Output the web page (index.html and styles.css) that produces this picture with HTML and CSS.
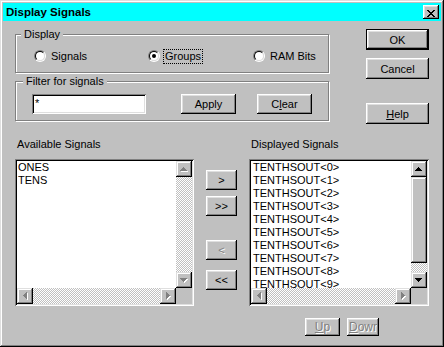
FILE: index.html
```html
<!DOCTYPE html>
<html lang="en">
<head>
    <meta charset="UTF-8">
    <title>Display Signals</title>
    <link rel="stylesheet" href="styles.css">
</head>
<body>
    <div class="window">
        <div class="titlebar">
            <span class="title">Display Signals</span>
            <button class="close-btn">
                <svg class="glyph" width="8" height="8"><path d="M0 0h2v1H0zM6 0h2v1H6zM1 1h2v1H1zM5 1h2v1H5zM2 2h4v1H2zM3 3h2v1H3zM2 4h4v1H2zM1 5h2v1H1zM5 5h2v1H5zM0 6h2v1H0zM6 6h2v1H6z"/></svg>
            </button>
        </div>

        <div class="client">
            <div class="top-row">
                <div class="groups">
                    <div class="group group-display">
                        <span class="group-label label-display">Display</span>
                        <div class="radio-row">
                            <div class="radio-item item-signals">
                                <span class="radio"><span class="radio-inner"></span></span>
                                <span class="radio-text">Signals</span>
                            </div>
                            <div class="radio-item item-groups">
                                <span class="radio"><span class="radio-inner"><span class="radio-dot"></span></span></span>
                                <span class="radio-text focus">Groups</span>
                            </div>
                            <div class="radio-item">
                                <span class="radio"><span class="radio-inner"></span></span>
                                <span class="radio-text">RAM Bits</span>
                            </div>
                        </div>
                    </div>

                    <div class="group group-filter">
                        <span class="group-label label-filter">Filter for signals</span>
                        <div class="filter-row">
                            <div class="textbox">*</div>
                            <button class="btn btn-apply">Apply</button>
                            <button class="btn btn-clear">C<u>l</u>ear</button>
                        </div>
                    </div>
                </div>

                <div class="side-buttons">
                    <button class="btn btn-side btn-default">OK</button>
                    <button class="btn btn-side btn-cancel">Cancel</button>
                    <button class="btn btn-side btn-help"><u>H</u>elp</button>
                </div>
            </div>

            <div class="lists-row">
                <div class="list-col list-available">
                    <div class="list-label">Available Signals</div>
                    <div class="listbox">
                        <div class="list-items">
                            <div class="list-item">ONES</div>
                            <div class="list-item">TENS</div>
                        </div>
                        <div class="vscroll">
                            <div class="sb-btn"><svg class="glyph off" width="8" height="4"><path class="shade" transform="translate(1 1)" d="M3 0h1v1h1v1h1v1h1v1H0V3h1V2h1V1h1z"/><path d="M3 0h1v1h1v1h1v1h1v1H0V3h1V2h1V1h1z"/></svg></div>
                            <div class="sb-track"></div>
                            <div class="sb-btn"><svg class="glyph off" width="8" height="4"><path class="shade" transform="translate(1 1)" d="M0 0h7v1H6v1H5v1H4v1H3V3H2V2H1V1H0z"/><path d="M0 0h7v1H6v1H5v1H4v1H3V3H2V2H1V1H0z"/></svg></div>
                        </div>
                        <div class="hscroll">
                            <div class="sb-btn"><svg class="glyph off" width="4" height="8"><path class="shade" transform="translate(1 1)" d="M3 0h1v7H3V6H2V5H1V4H0V3h1V2h1V1h1z"/><path d="M3 0h1v7H3V6H2V5H1V4H0V3h1V2h1V1h1z"/></svg></div>
                            <div class="sb-track"></div>
                            <div class="sb-btn"><svg class="glyph off" width="4" height="8"><path class="shade" transform="translate(1 1)" d="M0 0h1v1h1v1h1v1h1v1H3v1H2v1H1v1H0z"/><path d="M0 0h1v1h1v1h1v1h1v1H3v1H2v1H1v1H0z"/></svg></div>
                        </div>
                        <div class="sb-corner"></div>
                    </div>
                </div>

                <div class="move-buttons">
                    <button class="btn btn-move">&gt;</button>
                    <button class="btn btn-move btn-add-all">&gt;&gt;</button>
                    <button class="btn btn-move btn-remove disabled">&lt;</button>
                    <button class="btn btn-move btn-remove-all">&lt;&lt;</button>
                </div>

                <div class="list-col list-displayed">
                    <div class="list-label">Displayed Signals</div>
                    <div class="listbox">
                        <div class="list-items list-shifted">
                            <div class="list-item">TENTHSOUT&lt;0&gt;</div>
                            <div class="list-item">TENTHSOUT&lt;1&gt;</div>
                            <div class="list-item">TENTHSOUT&lt;2&gt;</div>
                            <div class="list-item">TENTHSOUT&lt;3&gt;</div>
                            <div class="list-item">TENTHSOUT&lt;4&gt;</div>
                            <div class="list-item">TENTHSOUT&lt;5&gt;</div>
                            <div class="list-item">TENTHSOUT&lt;6&gt;</div>
                            <div class="list-item">TENTHSOUT&lt;7&gt;</div>
                            <div class="list-item">TENTHSOUT&lt;8&gt;</div>
                            <div class="list-item">TENTHSOUT&lt;9&gt;</div>
                        </div>
                        <div class="vscroll">
                            <div class="sb-btn"><svg class="glyph" width="8" height="4"><path d="M3 0h1v1h1v1h1v1h1v1H0V3h1V2h1V1h1z"/></svg></div>
                            <div class="sb-thumb"></div>
                            <div class="sb-track"></div>
                            <div class="sb-btn"><svg class="glyph" width="8" height="4"><path d="M0 0h7v1H6v1H5v1H4v1H3V3H2V2H1V1H0z"/></svg></div>
                        </div>
                        <div class="hscroll">
                            <div class="sb-btn"><svg class="glyph off" width="4" height="8"><path class="shade" transform="translate(1 1)" d="M3 0h1v7H3V6H2V5H1V4H0V3h1V2h1V1h1z"/><path d="M3 0h1v7H3V6H2V5H1V4H0V3h1V2h1V1h1z"/></svg></div>
                            <div class="sb-track"></div>
                            <div class="sb-btn"><svg class="glyph off" width="4" height="8"><path class="shade" transform="translate(1 1)" d="M0 0h1v1h1v1h1v1h1v1H3v1H2v1H1v1H0z"/><path d="M0 0h1v1h1v1h1v1h1v1H3v1H2v1H1v1H0z"/></svg></div>
                        </div>
                        <div class="sb-corner"></div>
                    </div>
                </div>
            </div>

            <div class="bottom-row">
                <button class="btn btn-small btn-up disabled"><span><u>U</u>p</span></button>
                <button class="btn btn-small btn-down disabled"><span><u>D</u>own</span></button>
            </div>
        </div>
    </div>
</body>
</html>
```

FILE: styles.css
```css
* {
    box-sizing: border-box;
}

body {
    margin: 0;
    background: #c0c0c0;
    font-family: 'Liberation Sans', Arial, sans-serif;
    font-size: 11px;
    color: #000;
}

/* Window frame */
.window {
    width: 444px;
    height: 347px;
    padding: 3px;
    background: #c0c0c0;
    box-shadow: inset -1px -1px #000, inset 1px 1px #dfdfdf, inset -2px -2px #808080, inset 2px 2px #fff;
}

.titlebar {
    height: 18px;
    display: flex;
    align-items: center;
    justify-content: space-between;
    padding: 0 2px 0 3px;
    background: #00ffff;
}

.title {
    font-weight: bold;
    font-size: 11.5px;
    line-height: 18px;
}

button {
    margin: 0;
    padding: 0;
    border: 0;
    font: inherit;
    color: #000;
    background: #c0c0c0;
    display: flex;
    align-items: center;
    justify-content: center;
}

.btn,
.close-btn,
.sb-btn,
.sb-thumb {
    background: #c0c0c0;
    box-shadow: inset -1px -1px #000, inset 1px 1px #fff, inset -2px -2px #808080, inset 2px 2px #dfdfdf;
}

.sb-btn,
.sb-thumb {
    box-shadow: inset -1px -1px #000, inset 1px 1px #dfdfdf, inset -2px -2px #808080, inset 2px 2px #fff;
}

.close-btn {
    width: 16px;
    height: 14px;
    display: block;
    padding: 3px 0 0 4px;
}

.glyph {
    display: block;
    overflow: visible;
    shape-rendering: crispEdges;
    fill: #000;
}

.glyph.off path {
    fill: #808080;
}

.glyph.off .shade {
    fill: #fff;
}

.btn-default {
    border: 1px solid #000;
}

.disabled {
    color: #808080;
    text-shadow: 1px 1px 0 #fff;
}

/* Client area */
.client {
    padding: 8px 0 0 12px;
}

.top-row {
    display: flex;
    align-items: flex-start;
}

.groups {
    width: 314px;
    margin: 5px 37px 0 0;
}

.group {
    border: 1px solid #808080;
    box-shadow: inset 1px 1px #fff, 1px 1px #fff;
}

.group-display {
    height: 39px;
}

.group-filter {
    height: 40px;
    margin-top: 8px;
}

.group-label {
    display: block;
    width: fit-content;
    margin-top: -7px;
    padding: 0 3px;
    line-height: 13px;
    background: #c0c0c0;
}

.label-display {
    margin-left: 5px;
}

.label-filter {
    margin-left: 7px;
}

/* Radio buttons */
.radio-row {
    display: flex;
    align-items: center;
    height: 12px;
    margin-top: 9px;
    padding-left: 18px;
}

.radio-item {
    display: flex;
    align-items: center;
}

.item-signals {
    width: 114px;
}

.item-groups {
    width: 105px;
}

.radio {
    width: 12px;
    height: 12px;
    margin-right: 3px;
    border: 1px solid;
    border-color: #808080 #fff #fff #808080;
    border-radius: 50%;
    display: flex;
}

.radio-inner {
    width: 10px;
    height: 10px;
    border: 1px solid;
    border-color: #000 #dfdfdf #dfdfdf #000;
    border-radius: 50%;
    background: #fff;
    display: flex;
    align-items: center;
    justify-content: center;
}

.radio-dot {
    width: 4px;
    height: 4px;
    border-radius: 50%;
    background: #000;
}

.radio-text {
    padding: 0 1px;
    border: 1px solid transparent;
    line-height: 13px;
}

.radio-text.focus {
    border: 1px dotted #000;
}

/* Filter */
.filter-row {
    display: flex;
    margin-top: 6px;
    padding-left: 16px;
}

.textbox {
    width: 114px;
    height: 20px;
    padding: 3px 3px 0;
    line-height: 13px;
    background: #fff;
    box-shadow: inset 1px 1px #808080, inset -1px -1px #fff, inset 2px 2px #000, inset -2px -2px #dfdfdf;
}

.btn-apply,
.btn-clear {
    width: 55px;
    height: 20px;
}

.btn-apply {
    margin-left: 35px;
}

.btn-clear {
    margin-left: 21px;
}

/* OK / Cancel / Help */
.side-buttons {
    width: 63px;
    display: flex;
    flex-direction: column;
}

.btn-side {
    width: 63px;
    height: 21px;
}

.btn-cancel {
    margin-top: 8px;
}

.btn-help {
    margin-top: 24px;
}

/* Lists */
.lists-row {
    display: flex;
    margin-top: 14px;
}

.list-available {
    width: 179px;
}

.list-displayed {
    width: 180px;
}

.list-label {
    height: 13px;
    line-height: 13px;
    padding-left: 2px;
    margin-bottom: 8px;
}

.listbox {
    height: 147px;
    padding: 2px;
    display: grid;
    grid-template-columns: 1fr 16px;
    grid-template-rows: 1fr 16px;
    box-shadow: inset 1px 1px #808080, inset -1px -1px #fff, inset 2px 2px #000, inset -2px -2px #dfdfdf;
}

.list-items {
    padding-left: 1px;
    background: #fff;
    overflow: hidden;
}

.list-shifted {
    padding-left: 2px;
}

.list-item {
    line-height: 13px;
    white-space: nowrap;
}

.vscroll {
    display: flex;
    flex-direction: column;
}

.hscroll {
    display: flex;
}

.sb-btn {
    width: 16px;
    height: 16px;
    flex: none;
    display: flex;
    align-items: center;
    justify-content: center;
}

.sb-thumb {
    height: 86px;
    flex: none;
}

.sb-track {
    flex: 1;
    background-image: conic-gradient(#fff 25%, #c0c0c0 0 50%, #fff 0 75%, #c0c0c0 0);
    background-size: 2px 2px;
}

.sb-corner {
    background: #c0c0c0;
}

/* Move buttons */
.move-buttons {
    width: 31px;
    margin: 0 12px;
    padding-top: 32px;
    display: flex;
    flex-direction: column;
}

.btn-move {
    height: 20px;
}

.btn-add-all {
    margin-top: 6px;
}

.btn-remove {
    margin-top: 24px;
}

.btn-remove-all {
    margin-top: 10px;
}

/* Up / Down */
.bottom-row {
    display: flex;
    gap: 7px;
    margin-top: 12px;
    padding-left: 290px;
}

.btn-small {
    height: 18px;
    font-size: 12px;
    justify-content: flex-start;
    padding-left: 2px;
}

.btn-small span {
    display: block;
    overflow: hidden;
    white-space: nowrap;
    text-align: center;
    line-height: 14px;
}

.btn-up {
    width: 35px;
}

.btn-up span {
    width: 31px;
}

.btn-down {
    width: 32px;
}

.btn-down span {
    width: 28px;
}
```
